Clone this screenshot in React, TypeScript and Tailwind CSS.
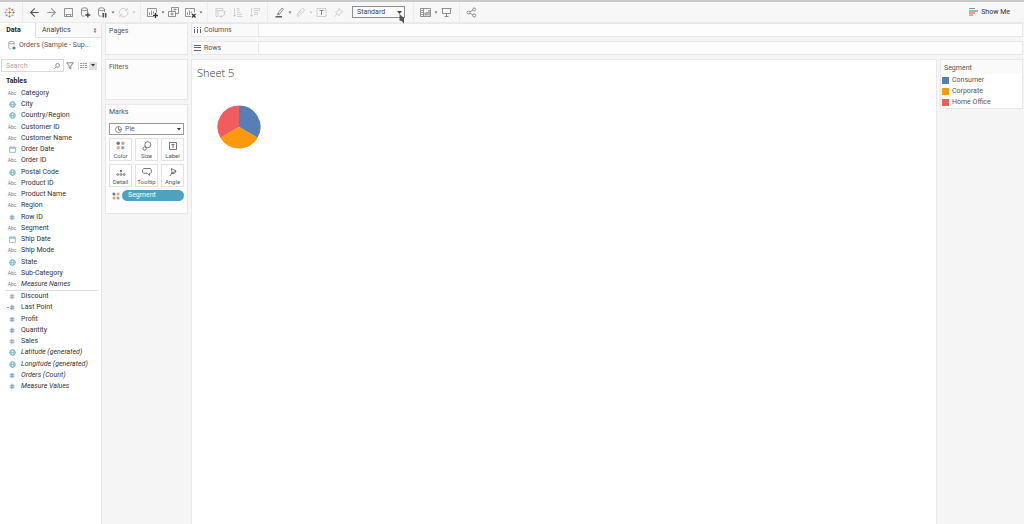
import { useState } from "react";
import type { ReactNode } from "react";
import { ArrowLeft, ArrowRight } from "lucide-react";
import clsx from "clsx";

type FieldKind = "abc" | "globe" | "date" | "number" | "measure" | "calc";

interface Field {
  name: string;
  kind: FieldKind;
  generated?: boolean;
}

const DIMENSIONS: Field[] = [
  { name: "Category", kind: "abc" },
  { name: "City", kind: "globe" },
  { name: "Country/Region", kind: "globe" },
  { name: "Customer ID", kind: "abc" },
  { name: "Customer Name", kind: "abc" },
  { name: "Order Date", kind: "date" },
  { name: "Order ID", kind: "abc" },
  { name: "Postal Code", kind: "globe" },
  { name: "Product ID", kind: "abc" },
  { name: "Product Name", kind: "abc" },
  { name: "Region", kind: "abc" },
  { name: "Row ID", kind: "number" },
  { name: "Segment", kind: "abc" },
  { name: "Ship Date", kind: "date" },
  { name: "Ship Mode", kind: "abc" },
  { name: "State", kind: "globe" },
  { name: "Sub-Category", kind: "abc" },
  { name: "Measure Names", kind: "abc", generated: true },
];

const MEASURES: Field[] = [
  { name: "Discount", kind: "measure" },
  { name: "Last Point", kind: "calc" },
  { name: "Profit", kind: "number" },
  { name: "Quantity", kind: "number" },
  { name: "Sales", kind: "measure" },
  { name: "Latitude (generated)", kind: "globe", generated: true },
  { name: "Longitude (generated)", kind: "globe", generated: true },
  { name: "Orders (Count)", kind: "number", generated: true },
  { name: "Measure Values", kind: "number", generated: true },
];

const LEGEND = [
  { name: "Consumer", swatch: "bg-[#5680b5]" },
  { name: "Corporate", swatch: "bg-[#fb990a]" },
  { name: "Home Office", swatch: "bg-[#f15d5e]" },
];

function Icon({ size = 11, children }: { size?: number; children: ReactNode }) {
  return (
    <svg
      width={size}
      height={size}
      viewBox={`0 0 ${size} ${size}`}
      fill="none"
      stroke="currentColor"
      strokeWidth="0.8"
      aria-hidden="true"
      className="shrink-0"
    >
      {children}
    </svg>
  );
}

function Caret({ label, faded }: { label: string; faded?: boolean }) {
  return (
    <button
      aria-label={label}
      className={clsx("flex h-4 w-1 shrink-0 items-center justify-center", faded ? "text-[#c4c4c4]" : "text-[#666]")}
    >
      <svg width="4" height="3" viewBox="0 0 4 3" fill="currentColor" aria-hidden="true">
        <path d="M0.500 0.500h3L2 2.500z" />
      </svg>
    </button>
  );
}

function Tool({ label, faded, children }: { label: string; faded?: boolean; children: ReactNode }) {
  return (
    <button
      aria-label={label}
      className={clsx("flex h-4 w-[17px] shrink-0 items-center justify-center", faded ? "text-[#c8c8c8]" : "text-[#777]")}
    >
      {children}
    </button>
  );
}

function Divider() {
  return <div className="mr-[3px] ml-1 h-full w-px shrink-0 bg-[#ececec]" />;
}

function Dots({ size = 9 }: { size?: number }) {
  return (
    <svg width={size} height={size} viewBox="0 0 9 9" aria-hidden="true">
      <circle cx="2.200" cy="2.200" r="1.700" fill="#777" />
      <circle cx="6.800" cy="2.200" r="1.700" fill="#ee9c83" />
      <circle cx="2.200" cy="6.800" r="1.700" fill="#ee9c83" />
      <circle cx="6.800" cy="6.800" r="1.700" fill="#86a9bb" />
    </svg>
  );
}

function Toolbar() {
  return (
    <header className="flex h-[23px] items-center border-t-2 border-b border-t-[#c9c9c9] border-b-[#ebebeb] bg-[#f7f7f7] pl-px">
      <Tool label="Start page">
        <svg width="11" height="11" viewBox="0 0 11 11" strokeWidth="0.9" fill="none" aria-hidden="true">
          <path d="M5.500 3.600v3.800M3.600 5.500h3.800" stroke="#e8762c" />
          <path d="M5.500 0.500v2M4.500 1.500h2" stroke="#8a8a9c" />
          <path d="M5.500 8.500v2M4.500 9.500h2" stroke="#6f7d9b" />
          <path d="M1.500 4.500v2M0.500 5.500h2" stroke="#9b9bb0" />
          <path d="M9.500 4.500v2M8.500 5.500h2" stroke="#666c8c" />
          <path d="M2.700 1.700v2M1.700 2.700h2" stroke="#e89a6a" />
          <path d="M8.300 1.700v2M7.300 2.700h2" stroke="#d6604a" />
          <path d="M2.700 7.300v2M1.700 8.300h2" stroke="#c9785a" />
          <path d="M8.300 7.300v2M7.300 8.300h2" stroke="#e8943c" />
        </svg>
      </Tool>
      <Divider />
      <Tool label="Undo">
        <ArrowLeft size={13} strokeWidth={2} className="text-[#555]" />
      </Tool>
      <Tool label="Redo">
        <ArrowRight size={13} strokeWidth={2} className="text-[#999]" />
      </Tool>
      <Tool label="Save">
        <Icon>
          <path d="M1.500 1.500h8v8h-8zM3.500 9.500v-2h4v2M1.500 7.500h1M8.500 7.500h1" />
        </Icon>
      </Tool>
      <Tool label="New data source">
        <Icon>
          <ellipse cx="4.500" cy="2.200" rx="3" ry="1.400" />
          <path d="M1.500 2.200v5.600c0 .9 1.300 1.400 3 1.400M7.500 2.200v3" />
          <path d="M7.800 5.500v5M5.300 8h5" strokeWidth="1.300" stroke="#444" />
        </Icon>
      </Tool>
      <Tool label="Pause updates">
        <Icon>
          <ellipse cx="4.500" cy="2.200" rx="3" ry="1.400" />
          <path d="M1.500 2.200v5.600c0 .9 1.300 1.400 3 1.400M7.500 2.200v3" />
          <path d="M6.300 6v4.500M8.700 6v4.500" strokeWidth="1.600" stroke="#555" />
        </Icon>
      </Tool>
      <Caret label="Update options" />
      <Tool label="Run update" faded>
        <Icon>
          <path d="M1.200 6.500a4.300 4.300 0 0 1 7.600-3.500M9.800 4.500a4.300 4.300 0 0 1-7.600 3.700M9.200 .8v2.500H6.700M1.800 10.300V7.800h2.500" />
        </Icon>
      </Tool>
      <Caret label="Run options" faded />
      <Divider />
      <Tool label="New worksheet">
        <Icon>
          <path d="M6.500 9.500h-6v-8h9v4M2.500 8V5.500M4.500 8V3.500M6.500 6.500V4.500" />
          <path d="M8.500 6v5M6 8.500h5" strokeWidth="1.300" stroke="#333" />
        </Icon>
      </Tool>
      <Caret label="New sheet options" />
      <Tool label="Duplicate">
        <Icon>
          <path d="M3.500 4.500v-4h7v6h-3M0.500 4.500h7v5h-7zM2.500 7h3M4 5.500v3M5.500 2.500h3M7 1.500v2" />
        </Icon>
      </Tool>
      <Tool label="Clear sheet">
        <Icon>
          <path d="M6 9.500H.500v-8h9v4M2.500 8V5.500M4.500 8V3.500M6.500 6V4.500" />
          <path d="M7 7l3.500 3.500M10.500 7L7 10.500" strokeWidth="1.300" stroke="#333" />
        </Icon>
      </Tool>
      <Caret label="Clear options" />
      <Divider />
      <div className="flex pl-px">
        <Tool label="Swap rows and columns" faded>
          <Icon>
            <path d="M1 1.500h7v2H1zM1 3.500v6h2v-6M5 9.500h2.500l2-2V4M8 5.500L9.500 4 11 5.500M6.500 8L5 9.500l1.500 1.500" />
          </Icon>
        </Tool>
        <Tool label="Sort ascending" faded>
          <Icon>
            <path d="M2.500 1v8.500M1 8l1.500 1.500L4 8M5 1.500h2v2H5M5 5.500h3.500M5 7.500h4.500M5 9.500h5.500" />
          </Icon>
        </Tool>
        <Tool label="Sort descending" faded>
          <Icon>
            <path d="M2.500 1v8.500M1 8l1.500 1.500L4 8M4.500 1.500h6v2h-6M5 5.500h3.500v2H5" />
          </Icon>
        </Tool>
      </div>
      <Divider />
      <Tool label="Highlight">
        <Icon>
          <path d="M3.500 8L4 6l4-5 1.500 1.200L5.500 7.200zM4 6l1.500 1.200" />
          <path d="M1.500 9.800h6.500" strokeWidth="1.300" stroke="#444" />
        </Icon>
      </Tool>
      <Caret label="Highlight options" />
      <Tool label="Group members" faded>
        <Icon>
          <path d="M3 6l3.800-4.200a1.500 1.500 0 0 1 2.200 2L4.800 8.700a1 1 0 0 1-1.500-1.300l3.200-3.700M3 6C1.800 7.500 1.800 9.500 3.500 9.800" />
        </Icon>
      </Tool>
      <Caret label="Group options" faded />
      <Tool label="Show mark labels" faded>
        <Icon>
          <path d="M1 1.500h9v8H1z" />
          <path d="M3.500 3.500h4M5.500 3.500V8" stroke="#888" strokeWidth="1" />
        </Icon>
      </Tool>
      <Tool label="Fix axes" faded>
        <Icon>
          <path d="M6 1.500l3.500 3.500-1.300.3-1.600 1.800-.3 1.800L2.500 5.200l1.800-.3 1.500-1.800zM4.200 7L1.500 9.700" />
        </Icon>
      </Tool>
      <div className="relative ml-[5px] h-3 w-[53px] shrink-0">
        <select
          aria-label="Fit"
          className="block h-full w-full appearance-none rounded-none border border-[#8c8c8c] bg-[#fbfbfb] pl-1 text-[7px] leading-[9px] text-[#444]"
        >
          <option>Standard</option>
          <option>Fit Width</option>
          <option>Fit Height</option>
          <option>Entire View</option>
        </select>
        <svg className="pointer-events-none absolute top-[5px] right-[3px]" width="5" height="3" viewBox="0 0 5 3" fill="#444" aria-hidden="true">
          <path d="M0 0h5L2.500 3z" />
        </svg>
        {/* mouse pointer */}
        <svg className="pointer-events-none absolute top-2 right-0 z-10" width="6" height="10" viewBox="0 0 6 10" fill="#555" aria-hidden="true">
          <path d="M0.500 0L5 4V8.500L4.500 9.500 3 7.200 0.500 6.500z" />
        </svg>
      </div>
      <div className="w-1 shrink-0" />
      <Divider />
      <Tool label="Show or hide cards">
        <Icon>
          <path d="M0.500 1.500h10v8h-10zM3.500 1.500v8M1.200 3.500h1.600M1.200 5.500h1.600M1.200 7.500h1.600" />
          <path d="M5.200 8.500v-3M7 8.500V5M9 8.500V3" strokeWidth="1.100" />
        </Icon>
      </Tool>
      <Caret label="Card options" />
      <Tool label="Presentation mode">
        <Icon>
          <path d="M0.500 1.500h10M1.500 1.500v5h8v-5M5.500 6.500v3M3.500 9.500h4" />
        </Icon>
      </Tool>
      <Divider />
      <Tool label="Share">
        <Icon>
          <circle cx="2.500" cy="5.500" r="1.500" />
          <circle cx="8.200" cy="2.500" r="1.500" />
          <circle cx="8.200" cy="8.500" r="1.500" />
          <path d="M3.800 4.800l3-1.600M3.800 6.200l3 1.600" />
        </Icon>
      </Tool>
      <button className="mr-[14px] ml-auto flex items-center gap-[3px] text-[7px] text-[#333]">
        <svg width="9" height="8" viewBox="0 0 9 8" aria-hidden="true">
          <path d="M0 0h6v1H0z" fill="#8f8f8f" />
          <path d="M0 2h9v2H0z" fill="#8ebfc9" />
          <path d="M0 4h6v2H0zM0 6h4v2H0z" fill="#f2a38d" />
        </svg>
        Show Me
      </button>
    </header>
  );
}

function FieldIcon({ kind }: { kind: FieldKind }) {
  if (kind === "abc") {
    return <span className="text-[5px] leading-[11px] text-[#777]">Abc</span>;
  }
  if (kind === "globe") {
    return (
      <svg width="7" height="7" viewBox="0 0 7 7" fill="none" stroke="#5fb0c2" strokeWidth="0.9" aria-hidden="true">
        <circle cx="3.500" cy="3.500" r="2.800" fill="#e3f1f5" />
        <ellipse cx="3.500" cy="3.500" rx="1.300" ry="2.800" strokeWidth="0.600" />
        <path d="M.700 3.500h5.600" strokeWidth="0.600" />
      </svg>
    );
  }
  if (kind === "date") {
    return (
      <svg width="7" height="7" viewBox="0 0 7 7" fill="none" stroke="#6ba7b7" strokeWidth="0.700" aria-hidden="true">
        <path d="M.600 1.200h5.800v5.200H.600zM.600 2.300h5.800M2 .200v1.400M5 .200v1.400" />
      </svg>
    );
  }
  return (
    <svg width="10" height="7" viewBox="0 0 10 7" fill="none" strokeWidth="0.700" aria-hidden="true">
      {kind === "calc" && <path d="M0 3.500h2" stroke="#777" />}
      <path
        d="M4.300 .800v5.400M5.900 .800v5.400M2.700 2.700h4.800M2.700 4.300h4.800"
        stroke={kind === "measure" ? "#999" : "#5c9bae"}
      />
    </svg>
  );
}

function FieldRow({ field }: { field: Field }) {
  return (
    <li className="flex h-[11px] items-center">
      <span className="flex w-[10px] shrink-0 items-center justify-center">
        <FieldIcon kind={field.kind} />
      </span>
      <button className={clsx("ml-1 text-[7px] leading-[11px] whitespace-nowrap text-[#333]", field.generated && "italic")}>
        {field.name}
      </button>
    </li>
  );
}

function DataPane() {
  const [query, setQuery] = useState("");
  const matches = (field: Field) => field.name.toLowerCase().includes(query.toLowerCase());

  return (
    <aside className="w-[102px] shrink-0 border-r border-[#e4e4e4] bg-white">
      <div className="flex h-[15px] text-[7px]">
        <button className="w-[35px] pr-2 text-center font-bold text-[#222]">Data</button>
        <button className="flex flex-1 items-center justify-between border-b border-l border-[#e2e2e2] bg-[#f9f9f9] pr-1 pl-[6px] text-[#444]">
          Analytics
          <svg width="4" height="5" viewBox="0 0 4 5" fill="#777" aria-hidden="true">
            <path d="M2 0l1.500 1.800H.500zM2 5L.500 3.200h3zM1.600 1h.800v3h-.800z" />
          </svg>
        </button>
      </div>
      <button className="flex h-[15px] items-center gap-[3px] pl-2 text-[7px] text-[#555]">
        <svg width="8" height="9" viewBox="0 0 8 9" fill="none" stroke="#888" strokeWidth="0.700" aria-hidden="true">
          <ellipse cx="3.400" cy="1.600" rx="2.600" ry="1.200" />
          <path d="M.800 1.600v5.200c0 .700 1.100 1.200 2.600 1.200M6 1.600v3" />
          <circle cx="6" cy="7" r="1.600" fill="#3a8fa8" stroke="none" />
        </svg>
        Orders (Sample - Sup...
      </button>

      <div className="mt-[6px] flex h-[13px] items-center pl-px">
        <label className="flex h-full w-[63px] items-center justify-between border border-[#d9d9d9] pr-[3px] pl-1">
          <input
            type="text"
            aria-label="Search"
            placeholder="Search"
            value={query}
            onChange={(e) => setQuery(e.target.value)}
            className="w-10 text-[7px] leading-[10px] text-[#333] outline-none placeholder:text-[#aaa]"
          />
          <svg width="6" height="6" viewBox="0 0 6 6" fill="none" stroke="#777" strokeWidth="0.800" aria-hidden="true">
            <circle cx="3.600" cy="2.400" r="1.900" />
            <path d="M2.200 3.800L.400 5.600" />
          </svg>
        </label>
        <button aria-label="Filter fields" className="ml-[2px] flex w-2 justify-center">
          <svg width="8" height="8" viewBox="0 0 8 8" fill="none" stroke="#666" strokeWidth="0.800" aria-hidden="true">
            <path d="M.700.800h6.600L4.800 4v3L3.200 6V4z" />
          </svg>
        </button>
        <div className="ml-1 h-2 w-px bg-[#ddd]" />
        <button aria-label="View as list" className="ml-px">
          <svg width="7" height="5" viewBox="0 0 7 5" fill="none" stroke="#999" strokeWidth="1" aria-hidden="true">
            <path d="M0 .500h2M2.500 .500h2M5 .500h2M0 2.500h2M2.500 2.500h2M5 2.500h2M0 4.500h2M2.500 4.500h2M5 4.500h2" />
          </svg>
        </button>
        <button aria-label="Data pane menu" className="ml-[2px] flex h-2 w-2 items-center justify-center bg-[#e0e0e0]">
          <svg width="4" height="3" viewBox="0 0 4 3" fill="#333" aria-hidden="true">
            <path d="M0 0h4L2 2.500z" />
          </svg>
        </button>
      </div>

      <h2 className="mt-[3px] pl-[6px] text-[7px] leading-[12px] font-bold text-[#222]">Tables</h2>
      <div className="mt-px pr-1 pl-[7px]">
        <ul className="grid min-h-[202px] content-between">
          {DIMENSIONS.filter(matches).map((field) => (
            <FieldRow key={field.name} field={field} />
          ))}
        </ul>
        <div className="-mr-px -ml-[2px] h-px bg-[#ddd]" />
        <ul className="grid min-h-[101px] content-between">
          {MEASURES.filter(matches).map((field) => (
            <FieldRow key={field.name} field={field} />
          ))}
        </ul>
      </div>
    </aside>
  );
}

function MarkButton({ label, children }: { label: string; children: ReactNode }) {
  return (
    <button className="flex h-[23px] flex-col items-center justify-between border border-[#e2e2e2] bg-white pt-[2px] text-[6px] leading-[9px] text-[#555]">
      {children}
      {label}
    </button>
  );
}

function Card({ title, className, children }: { title: string; className: string; children?: ReactNode }) {
  return (
    <section className={clsx("border border-[#e8e8e8] bg-[#fcfcfc] px-[3px] pt-[3px]", className)}>
      <h2 className="text-[7px] leading-[9px] text-[#555]">{title}</h2>
      {children}
    </section>
  );
}

function MarksColumn() {
  return (
    <div className="flex w-[86px] shrink-0 flex-col gap-1 pl-[3px]">
      <Card title="Pages" className="h-8" />
      <Card title="Filters" className="h-[41px]" />
      <Card title="Marks" className="h-[110px]">
        <div className="relative mt-[6px] flex h-3 items-center border border-[#999] bg-white pl-[5px]">
          <svg width="7" height="7" viewBox="0 0 7 7" fill="none" stroke="#666" strokeWidth="0.700" aria-hidden="true">
            <circle cx="3.500" cy="3.500" r="3" />
            <path d="M3.500.500v3h3M3.500 3.500L5.600 5.600" />
          </svg>
          <select aria-label="Mark type" className="flex-1 appearance-none pl-[3px] text-[7px] leading-[10px] text-[#666]">
            <option>Pie</option>
            <option>Bar</option>
            <option>Line</option>
          </select>
          <svg className="pointer-events-none absolute top-1 right-[2px]" width="4" height="3" viewBox="0 0 4 3" fill="#333" aria-hidden="true">
            <path d="M0 0h4L2 2.500z" />
          </svg>
        </div>
        <div className="mt-[3px] grid grid-cols-3 gap-[3px]">
          <MarkButton label="Color">
            <Dots />
          </MarkButton>
          <MarkButton label="Size">
            <Icon size={10}>
              <circle cx="5.800" cy="3.700" r="3" />
              <circle cx="2.600" cy="7.500" r="1.700" fill="#fff" />
            </Icon>
          </MarkButton>
          <MarkButton label="Label">
            <Icon size={10}>
              <path d="M1.500 1.500h7v7h-7zM3.500 3.500h3M5 3.500v3.500" />
            </Icon>
          </MarkButton>
          <MarkButton label="Detail">
            <Icon size={10}>
              <circle cx="5" cy="4" r="0.800" fill="currentColor" />
              <circle cx="1.800" cy="7.500" r="0.900" />
              <circle cx="5" cy="7.500" r="0.900" />
              <circle cx="8.200" cy="7.500" r="0.900" />
            </Icon>
          </MarkButton>
          <MarkButton label="Tooltip">
            <Icon size={10}>
              <path d="M1.800 1.500h6.400l1.200 1.200v2.400l-1.200 1.200H7.500v2.200L5.300 6.300H1.800L.600 5.100V2.700z" />
            </Icon>
          </MarkButton>
          <MarkButton label="Angle">
            <Icon size={10}>
              <path d="M3.500 1.500l4.500 2.500L4 6.200zM8 4C7.500 6 6 7 3.300 6.500M4 6L2 9" />
            </Icon>
          </MarkButton>
        </div>
        <div className="mt-[3px] flex items-center gap-[2px] pl-[3px]">
          <Dots size={8} />
          <button className="h-[11px] flex-1 rounded-full bg-[#4ea1bf] pl-[6px] text-left text-[7px] leading-[11px] text-white">
            Segment
          </button>
        </div>
      </Card>
    </div>
  );
}

function Shelf({ title, children }: { title: string; children: ReactNode }) {
  return (
    <div className="flex h-[14px] border border-[#e8e8e8] bg-[#fdfdfd]">
      <div className="flex w-[67px] shrink-0 items-center gap-[3px] border-r border-[#e8e8e8] bg-[#fafafa] pl-[2px] text-[7px] text-[#555]">
        <svg width="7" height="6" viewBox="0 0 7 6" fill="none" stroke="#666" strokeWidth="1" aria-hidden="true">
          {children}
        </svg>
        {title}
      </div>
    </div>
  );
}

function PieChart() {
  return (
    <svg width="44" height="44" viewBox="-22 -22 44 44" role="img" aria-label="Orders by segment">
      <path d="M0 0V-21.500A21.500 21.500 0 0 1 18.600 10.800Z" fill="#5680b5" />
      <path d="M0 0L18.600 10.800A21.500 21.500 0 0 1 -18.600 10.800Z" fill="#fb990a" />
      <path d="M0 0L-18.600 10.800A21.500 21.500 0 0 1 0 -21.500Z" fill="#f15d5e" />
    </svg>
  );
}

function Legend() {
  return (
    <section className="w-[83px] shrink-0 self-start border border-[#e8e8e8] bg-white">
      <h2 className="bg-[#fafafa] pt-[2px] pl-[3px] text-[7px] leading-[12px] text-[#555]">Segment</h2>
      <ul className="pt-px">
        {LEGEND.map((item) => (
          <li key={item.name} className="flex h-[11px] items-center gap-[3px] pl-px text-[7px] text-[#555]">
            <span className={clsx("size-[7px]", item.swatch)} />
            {item.name}
          </li>
        ))}
      </ul>
    </section>
  );
}

export default function App() {
  return (
    <div className="flex min-h-screen flex-col bg-[#f5f5f5] font-[Roboto,sans-serif]">
      <Toolbar />
      <div className="flex flex-1">
        <DataPane />
        <div className="flex flex-1 gap-[3px] pr-px">
          <MarksColumn />
          <div className="flex min-w-0 flex-1 flex-col gap-1">
            <Shelf title="Columns">
              <path d="M.500 0v1M.500 2v4M3.500 0v1M3.500 2v4M6.500 0v1M6.500 2v4" />
            </Shelf>
            <Shelf title="Rows">
              <path d="M0 .500h7M0 2.500h7M0 5.500h7" />
            </Shelf>
            <div className="flex flex-1 gap-[3px]">
              <main className="flex-1 border border-b-0 border-[#eaeaea] bg-white pt-[6px] pl-[5px]">
                <h1 className="font-['Open_Sans',sans-serif] text-[11px] leading-[14px] font-light text-[#333]">Sheet 5</h1>
                <div className="mt-[25px] ml-5">
                  <PieChart />
                </div>
              </main>
              <Legend />
            </div>
          </div>
        </div>
      </div>
    </div>
  );
}
